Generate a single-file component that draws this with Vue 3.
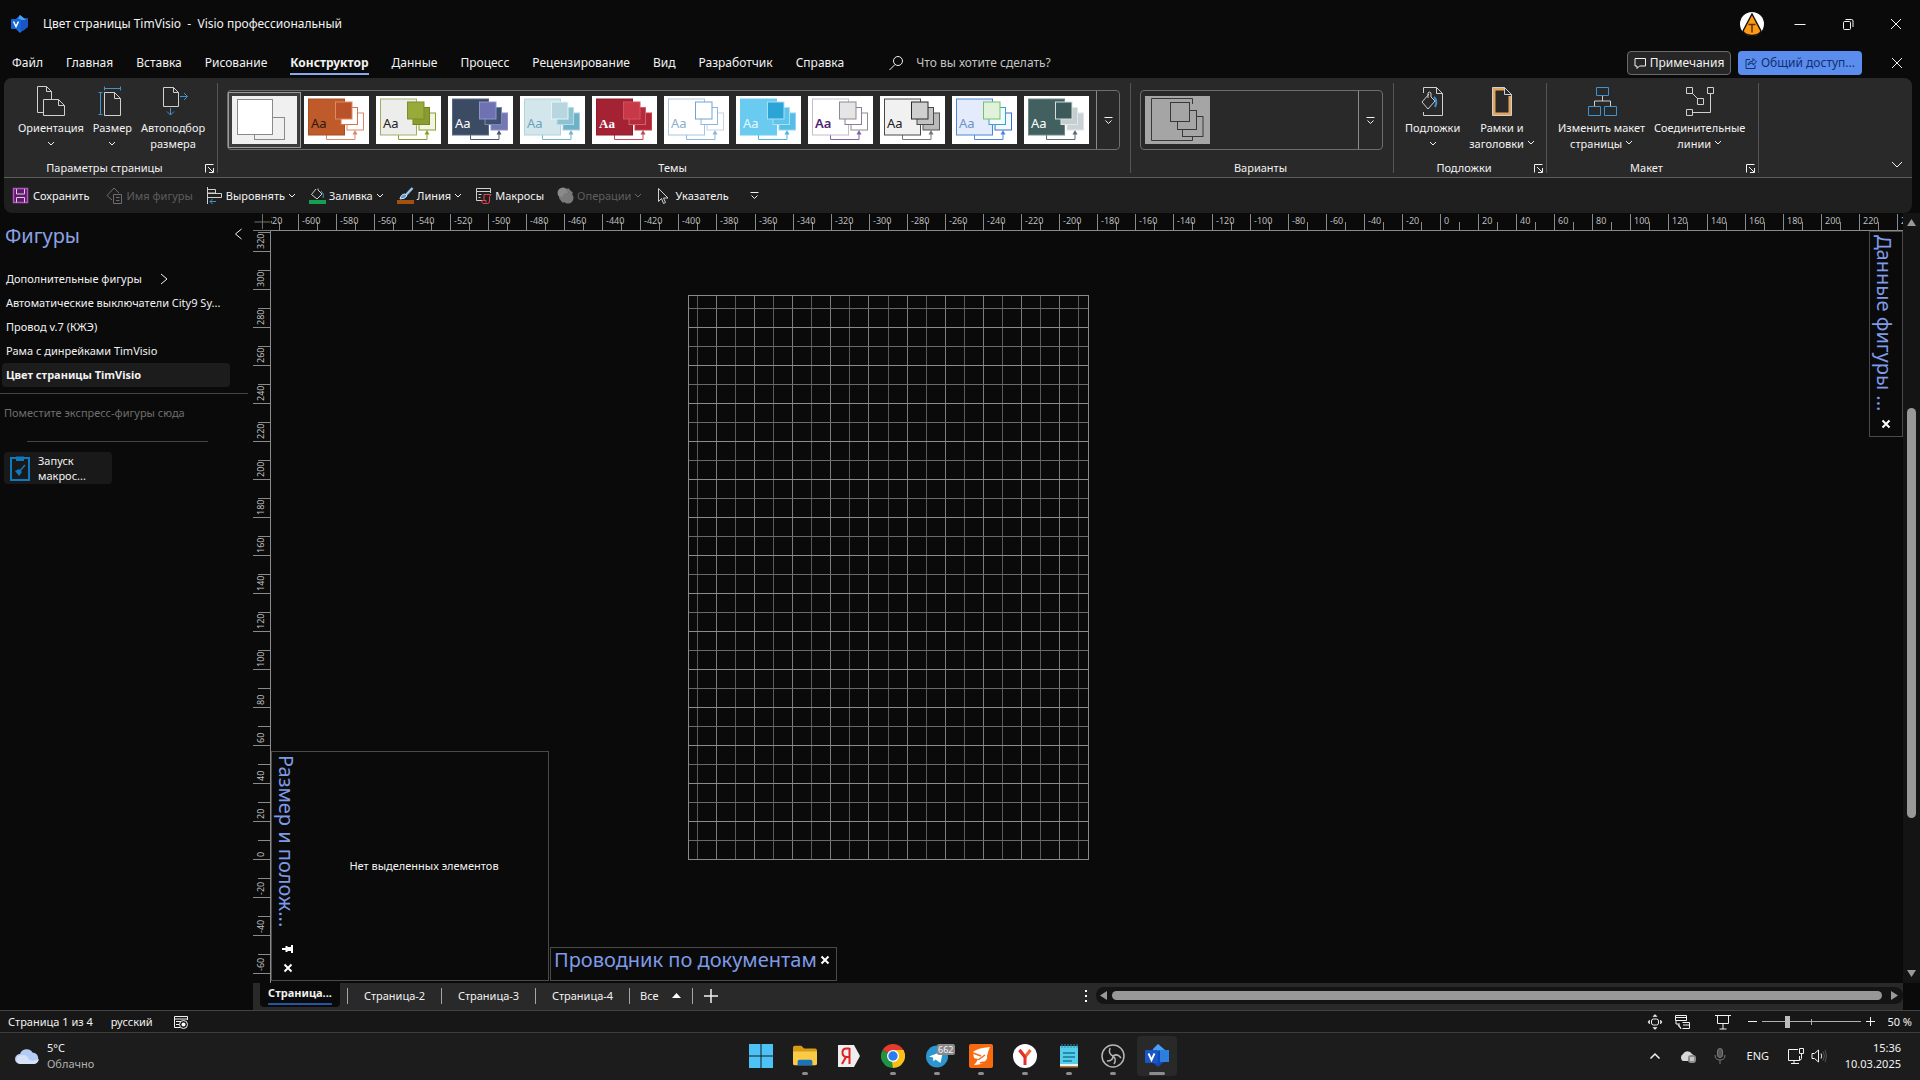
<script setup>
import { ref } from 'vue'

const tabs = ['Файл', 'Главная', 'Вставка', 'Рисование', 'Конструктор', 'Данные', 'Процесс', 'Рецензирование', 'Вид', 'Разработчик', 'Справка']
const activeTab = ref('Конструктор')
const zoom = ref(24)

const themes = [
  { id: 't2', main: '#bf5a2b', edge: '#a94c22', r1: '#b9512a', e1: '#e08a60', r2: '#ffffff', e2: '#d9744a', r3: '#ffffff', e3: '#d9886a', line: '#d9886a', aa: '#2a1a12' },
  { id: 't3', main: '#ededeb', edge: '#a3ad6a', r1: '#98aa3a', e1: '#7d8e28', r2: '#8a9c30', e2: '#75861f', r3: '#f2f4e4', e3: '#8a9c30', line: '#8a9c30', aa: '#222222' },
  { id: 't4', main: '#3b4b63', edge: '#5c6a80', r1: '#6f72b2', e1: '#9395c8', r2: '#3f4f70', e2: '#7f86b0', r3: '#7377b4', e3: '#8b8fc2', line: '#4a5875', aa: '#ffffff' },
  { id: 't5', main: '#d3e6ec', edge: '#b2d2dc', r1: '#b7d6e0', e1: '#e6f3f6', r2: '#8cc3d2', e2: '#b9dbe4', r3: '#6db2c8', e3: '#a6d0dd', line: '#79b3c6', aa: '#6ba3bd' },
  { id: 't6', main: '#a32334', edge: '#8c1c2c', r1: '#c73849', e1: '#d8505f', r2: '#b52b3c', e2: '#d0606c', r3: '#b02636', e3: '#c4404f', line: '#bd4a57', aa: '#ffffff', serif: true },
  { id: 't7', main: '#ffffff', edge: '#a9c5e0', r1: '#ffffff', e1: '#6fa3d4', r2: '#ffffff', e2: '#8db8de', r3: '#ffffff', e3: '#c0d6ea', line: '#8fb6da', aa: '#8caecf' },
  { id: 't8', main: '#68cbef', edge: '#68cbef', r1: '#2ba5d6', e1: '#a7e0f5', r2: '#5fc4ea', e2: '#a7e0f5', r3: '#55bde6', e3: '#8fd6f1', line: '#4fb5dd', aa: '#e9f8fd' },
  { id: 't9', main: '#ffffff', edge: '#c4bccb', r1: '#e5e5e6', e1: '#8b8b90', r2: '#ffffff', e2: '#8d7b9e', r3: '#ffffff', e3: '#8b8b90', line: '#8560a6', aa: '#4d2470', bold: true },
  { id: 't10', main: '#f1f1f1', edge: '#4a4a4a', r1: '#cfcfcf', e1: '#2b2b2b', r2: '#c3c3c3', e2: '#4a4a4a', r3: '#b9b9b9', e3: '#555555', line: '#777777', aa: '#222222' },
  { id: 't11', main: '#e4ebfa', edge: '#4d86d8', r1: '#e0f3da', e1: '#7abf6a', r2: '#f2fdff', e2: '#35a4cf', r3: '#f4f8ff', e3: '#3b6fc4', line: '#4d86d8', aa: '#6c93cc' },
  { id: 't12', main: '#41605f', edge: '#6f8786', r1: '#3c5a5a', e1: '#d5dddd', r2: '#c5cdd1', e2: '#e2e7ea', r3: '#cbd2d7', e3: '#dfe4e8', line: '#5a6b6c', aa: '#ffffff' }
]

const shapes = ['Автоматические выключатели City9 Sy...', 'Провод v.7 (КЖЭ)', 'Рама с динрейками TimVisio', 'Цвет страницы TimVisio']
const activeShape = ref('Цвет страницы TimVisio')

const hTicks = []
for (let v = -620; v <= 240; v += 20) {
  hTicks.push({ v, x: Math.round(1169 + v * 1.904) })
}

/* Vertical ruler: values grow upwards */
const vTicks = []
for (let v = 320; v >= -60; v -= 20) {
  vTicks.push({ v, y: 628 - Math.round(v * 1.9) })
}

/* Drawing page grid, every 10 mm */
const gridX = []
for (let i = 0; i < 21; i++) gridX.push({ p: Math.round(9 + i * 19.05), major: i % 2 === 1 })
const gridY = []
for (let i = 1; i < 30; i++) gridY.push({ p: 564 - i * 19, major: i % 2 === 0 })

const pages = ['Страница-2', 'Страница-3', 'Страница-4']
</script>

<template>
  <div class="app">
    <header class="titlebar">
      <svg class="i18" viewBox="0 0 18 18"><path d="M9 0l5 4v9l-5 5-4-4V4z" fill="#1f6fe0" /><path d="M9 3h8v9l-5 4-5-2z" fill="#1a55c4" /><path d="M9 0l6 5H7z" fill="#4aa3f5" /><rect y="4" width="10" height="10" rx="1" fill="#1565d8" /><path d="M2.500 6.500L5 11.500l2.500-5" fill="none" stroke="#fff" stroke-width="1.500" /></svg>
      <h1 class="doc-title">Цвет страницы TimVisio&nbsp; -&nbsp; Visio профессиональный</h1>
      <div class="win">
        <svg class="avatar" viewBox="0 0 24 24"><circle cx="12" cy="12" r="12" fill="#fff" /><path d="M12 2L3 19q1 4 9 4.500Q20 23 21 19z" fill="#ff9914" stroke="#1a1208" stroke-width="1.500" /><path d="M8.500 12.500h7M12 12.500v8" stroke="#5c3405" stroke-width="1.500" /></svg>
        <button class="ib" aria-label="Свернуть"><svg class="i12" viewBox="0 0 12 12"><path d="M0.500 6.500h11" class="s" /></svg></button>
        <button class="ib" aria-label="Восстановить"><svg class="i12" viewBox="0 0 12 12"><rect x="1.500" y="3.500" width="7" height="8" rx="1" class="s" /><path d="M3.500 1.500h6q1.500 0 1.500 1.500V9" class="s" /></svg></button>
        <button class="ib" aria-label="Закрыть"><svg class="i12" viewBox="0 0 12 12"><path d="M1 1l10 10M11 1L1 11" class="s" /></svg></button>
      </div>
    </header>

    <nav class="tabs">
      <button v-for="t in tabs" :key="t" class="tab" :class="{ on: t === activeTab }" @click="activeTab = t">{{ t }}</button>
      <label class="search">
        <svg class="i16" viewBox="0 0 16 16"><circle cx="10" cy="6" r="4.500" class="s" /><path d="M7 9.500L1.500 15" class="s" /></svg>
        <input type="text" placeholder="Что вы хотите сделать?" aria-label="Что вы хотите сделать?" />
      </label>
      <div class="tab-right">
        <button class="comments"><svg class="i12" viewBox="0 0 12 12"><path d="M1 1.500h10.500V9H5.500L3 11.500V9H1z" class="s" /></svg>Примечания</button>
        <button class="share"><svg class="i12" viewBox="0 0 12 12"><path d="M5 2.500H1v9h9V8M3 8q.5-4 5-4V1.500L11.500 5 8 8V6Q5 6 3 8z" fill="none" stroke="#10306e" /></svg>Общий доступ...</button>
        <button class="ib" aria-label="Закрыть документ"><svg class="i12" viewBox="0 0 12 12"><path d="M1 1l10 10M11 1L1 11" class="s" /></svg></button>
      </div>
    </nav>

    <section class="ribbon">
      <div class="groups">
        <div class="group g-page">
          <div class="body">
            <button class="big">
              <svg class="i32" viewBox="0 0 32 32"><path d="M8 27.500H2.500v-26h9l5 5V14M11.500 1.500v5h5" class="g" /><path d="M8.500 14.500h15l6 6v10h-21zM23.500 14.500v6h6" class="g" /></svg>
              <span>Ориентация</span><svg class="chev" viewBox="0 0 8 6"><path d="M1 1l3 3 3-3" class="s" /></svg>
            </button>
            <button class="big">
              <svg class="i32" viewBox="0 0 32 32"><path d="M8.500 7.500h10l6 6v17h-16zM18.500 7.500v6h6" class="g" /><path d="M4.500 7v23M2.500 7.500h4M2.500 29.500h4M8 3.500h17M8.500 1.500v4M24.500 1.500v4" class="b" /></svg>
              <span>Размер</span><svg class="chev" viewBox="0 0 8 6"><path d="M1 1l3 3 3-3" class="s" /></svg>
            </button>
            <button class="big">
              <svg class="i32" viewBox="0 0 32 32"><path d="M6.500 2.500h10l5 5v14h-15zM16.500 2.500v5h5" class="g" /><path d="M23 11.500h7M27 8l3.500 3.500L27 15M13.500 23v7M10 26.500l3.500 3.500 3.500-3.500" class="b" /></svg>
              <span>Автоподбор</span><span>размера</span>
            </button>
          </div>
          <div class="foot"><span>Параметры страницы</span><button class="launch" aria-label="Параметры страницы"><svg class="i9" viewBox="0 0 9 9"><path d="M.5 8.500V.5h8M3 3l5 5M8.500 4v4.500H4" class="s" /></svg></button></div>
        </div>

        <div class="group g-themes">
          <div class="gallery">
            <button class="thumb sel" aria-label="Без темы">
              <svg viewBox="0 0 65 48"><rect width="65" height="48" fill="#f0f0f0" /><rect x="22.500" y="21.500" width="30" height="22" fill="#f0f0f0" stroke="#8a8a8a" /><rect x="5.500" y="3.500" width="35" height="35" fill="#fff" stroke="#8a8a8a" /></svg>
            </button>
            <button v-for="t in themes" :key="t.id" class="thumb" :aria-label="t.id">
              <svg viewBox="0 0 65 48">
                <rect width="65" height="48" fill="#fff" />
                <path d="M22.500 39v4.500h28.500V36" fill="none" :stroke="t.line" />
                <path d="M51 34l-2.500 4.500h5z" :fill="t.line" />
                <rect x="4.500" y="3" width="36" height="36" :fill="t.main" :stroke="t.edge" />
                <rect x="43" y="17" width="16.500" height="17" :fill="t.r3" :stroke="t.e3" />
                <rect x="37" y="11.500" width="16.500" height="17" :fill="t.r2" :stroke="t.e2" />
                <rect x="31.500" y="6" width="16.500" height="17" :fill="t.r1" :stroke="t.e1" />
                <text x="7" y="32" class="aa" :class="{ serif: t.serif, bold: t.bold }" :fill="t.aa">Aa</text>
              </svg>
            </button>
            <button class="more" aria-label="Ещё темы"><svg class="i9" viewBox="0 0 9 9"><path d="M.5 1.500h8M1.500 4.500l3 3 3-3" class="s" /></svg></button>
          </div>
          <div class="foot"><span>Темы</span></div>
        </div>

        <div class="group g-vars">
          <div class="gallery">
            <button class="thumb" aria-label="Вариант">
              <svg viewBox="0 0 65 48"><rect width="65" height="48" fill="#a5a5a6" /><g fill="#a5a5a6" stroke="#38383a"><path d="M47.500 33v11.500h-41V2.500h41V8" /><rect x="37.500" y="20.500" width="20.500" height="20" /><rect x="32.500" y="14.500" width="19" height="19" /><rect x="25.500" y="6.500" width="19" height="19" /></g></svg>
            </button>
            <button class="more" aria-label="Ещё варианты"><svg class="i9" viewBox="0 0 9 9"><path d="M.5 1.500h8M1.500 4.500l3 3 3-3" class="s" /></svg></button>
          </div>
          <div class="foot"><span>Варианты</span></div>
        </div>

        <div class="group g-back">
          <div class="body">
            <button class="big">
              <svg class="i32" viewBox="0 0 32 32"><path d="M6.500 8V2.500h13l6 6v22h-19V27M19.500 2.500v6h6" class="g" /><path d="M12 9l-7 8 6 7 7-8-4-4V8q-2-2-3 0v5" class="g" /><path d="M17 12q4 4 1 10" class="b" stroke-width="2" /></svg>
              <span>Подложки</span><svg class="chev" viewBox="0 0 8 6"><path d="M1 1l3 3 3-3" class="s" /></svg>
            </button>
            <button class="big">
              <svg class="i32" viewBox="0 0 32 32"><path d="M18 4H8v25h16V11" fill="none" stroke="#e5a55c" stroke-width="3" /><path d="M6.500 30.500v-28h12l7 7v21zM18.500 2.500v7h7" class="g" /></svg>
              <span>Рамки и</span><span>заголовки <svg class="chev" viewBox="0 0 8 6"><path d="M1 1l3 3 3-3" class="s" /></svg></span>
            </button>
          </div>
          <div class="foot"><span>Подложки</span><button class="launch" aria-label="Подложки"><svg class="i9" viewBox="0 0 9 9"><path d="M.5 8.500V.5h8M3 3l5 5M8.500 4v4.500H4" class="s" /></svg></button></div>
        </div>

        <div class="group g-layout">
          <div class="body">
            <button class="big">
              <svg class="i32" viewBox="0 0 32 32"><path d="M16.500 10v6M8.500 21v-5h16v5" class="g" /><path d="M10.500 2.500h12v8h-12zM2.500 21.500h12v9h-12zM18.500 21.500h12v9h-12z" class="b" /></svg>
              <span>Изменить макет</span><span>страницы <svg class="chev" viewBox="0 0 8 6"><path d="M1 1l3 3 3-3" class="s" /></svg></span>
            </button>
            <button class="big">
              <svg class="i32" viewBox="0 0 32 32"><path d="M2.500 2.500h6v6h-6zM23.500 2.500h6v6h-6zM13.500 13.500h6v6h-6zM2.500 24.500h6v6h-6zM8 8l6 6M26.500 8.500v19h-18" class="g" /></svg>
              <span>Соединительные</span><span>линии <svg class="chev" viewBox="0 0 8 6"><path d="M1 1l3 3 3-3" class="s" /></svg></span>
            </button>
          </div>
          <div class="foot"><span>Макет</span><button class="launch" aria-label="Макет"><svg class="i9" viewBox="0 0 9 9"><path d="M.5 8.500V.5h8M3 3l5 5M8.500 4v4.500H4" class="s" /></svg></button></div>
        </div>
        <button class="collapse" aria-label="Свернуть ленту"><svg class="i12" viewBox="0 0 12 12"><path d="M1 4l5 5 5-5" class="s" /></svg></button>
      </div>

      <div class="qat">
        <button class="save"><svg class="i17" viewBox="0 0 17 17"><path d="M1.500 1.500h14v14h-14z" fill="#5b1d66" stroke="#b455c4" stroke-width="1.500" /><path d="M4.500 2v5h8V2M4.500 15.500v-5h8v5" fill="none" stroke="#e6c4ec" /></svg>Сохранить</button>
        <button disabled><svg class="i17" viewBox="0 0 17 17"><path d="M6 13L1 8.500 8 1l5 5" class="d" /><path d="M7.500 7.500h8v9h-8zM10 10.500h3.500M10 13.500h3.500" class="d" /></svg>Имя фигуры</button>
        <button><svg class="i17" viewBox="0 0 17 17"><path d="M1.500 0v17M1.500 2.500h8v3.500h-8M1.500 6.500h14v4h-14" class="g" /><path d="M10 14.500H4M6.500 12L4 14.500 6.500 17" class="b" /></svg>Выровнять<svg class="chev" viewBox="0 0 8 6"><path d="M1 1l3 3 3-3" class="s" /></svg></button>
        <button><svg class="i17" viewBox="0 0 17 17"><path d="M7 2L2.500 7.500 8 12l5-5-4-4V1.500" class="g" /><path d="M12 4q4 3 2 7" class="b" /><rect y="13" width="17" height="4" fill="#12a150" /></svg>Заливка<svg class="chev" viewBox="0 0 8 6"><path d="M1 1l3 3 3-3" class="s" /></svg></button>
        <button><svg class="i17" viewBox="0 0 17 17"><path d="M15.500 1L8 9" stroke="#9cc7ea" stroke-width="2.500" /><path d="M8 7q-4 0-5 5 5 0 7-3z" fill="#5a9bd0" stroke="#d0e4f4" /><rect y="13" width="17" height="4" fill="#a4500f" /></svg>Линия<svg class="chev" viewBox="0 0 8 6"><path d="M1 1l3 3 3-3" class="s" /></svg></button>
        <button><svg class="i17" viewBox="0 0 17 17"><path d="M7 13.500H1.500v-12h14V6M1.500 4.500h14" class="g" /><path d="M3.500 7.500h3M3.500 10.500h2" class="g" /><path d="M9 13V7.500h7l-1.500 2V14q0 2.500-2 2.500H8q-1.500-1-1-3h4v2" fill="none" stroke="#e0484f" /></svg>Макросы</button>
        <button disabled><svg class="i17" viewBox="0 0 17 17"><circle cx="6" cy="6" r="5.500" fill="#8a8a8a" /><circle cx="11" cy="11" r="5.500" fill="#7a7a7a" /><path d="M3 10l4 5M10 2l5 5" stroke="#7a7a7a" stroke-width="3" /></svg>Операции<svg class="chev" viewBox="0 0 8 6"><path d="M1 1l3 3 3-3" class="d" /></svg></button>
        <button><svg class="i17" viewBox="0 0 17 17"><path d="M3.500 1.500v13l3-3 2 5 2-1-2-4.500h4.500z" class="g" /></svg>Указатель</button>
        <button class="qmore" aria-label="Настройка панели"><svg class="i9" viewBox="0 0 9 9"><path d="M.5 1.500h8M1.500 4.500l3 3 3-3" class="s" /></svg></button>
      </div>
    </section>

    <main class="work">
      <aside class="shapes">
        <div class="sh-head"><h2>Фигуры</h2><button class="ib" aria-label="Свернуть панель"><svg class="i12" viewBox="0 0 12 12"><path d="M8.500 1L2.500 6l6 5" class="s" /></svg></button></div>
        <div class="sh-list">
          <button class="sh">Дополнительные фигуры<svg class="i12 arrow" viewBox="0 0 12 12"><path d="M3 1l6 5-6 5" class="s" /></svg></button>
          <button v-for="s in shapes" :key="s" class="sh" :class="{ on: s === activeShape }" @click="activeShape = s">{{ s }}</button>
        </div>
        <p class="hint">Поместите экспресс-фигуры сюда</p>
        <hr />
        <button class="macro">
          <svg viewBox="0 0 20 26"><path d="M1 3h18v22H1z" fill="none" stroke="#0f79bf" stroke-width="2" /><path d="M6 1.500h8V6H6z" fill="#0f79bf" /><path d="M15 10l-6 7" stroke="#0f79bf" stroke-width="1.500" /><path d="M5 16l4-2 3 3-3 4z" fill="#0f79bf" /></svg>
          <span>Запуск<br />макрос...</span>
        </button>
      </aside>

      <div class="editor">
        <div class="view">
          <div class="hrow">
            <svg class="corner" viewBox="0 0 18 18"><path d="M9.500 1v16M1 9.500h17" stroke="#777" /></svg>
            <svg class="hruler">
              <g v-for="t in hTicks" :key="t.v">
                <path :d="`M${t.x}.5 1V18`" stroke="#8a8a8a" />
                <path :d="`M${t.x + 19}.5 9V18`" stroke="#8a8a8a" />
                <text :x="t.x + 4" y="11" class="num">{{ t.v }}</text>
              </g>
            </svg>
          </div>
          <div class="crow">
            <svg class="vruler">
              <g v-for="t in vTicks" :key="t.v">
                <path :d="`M0 ${t.y}.5H17`" stroke="#8a8a8a" />
                <path :d="`M5 ${t.y - 19}.5H17`" stroke="#8a8a8a" />
                <text :transform="`translate(11 ${t.y - 2}) rotate(-90)`" class="num">{{ t.v }}</text>
              </g>
            </svg>
            <div class="canvas">
              <svg class="page" viewBox="0 0 401 565">
                <path v-for="g in gridX" :key="'x' + g.p" :d="`M${g.p}.5 0V565`" :stroke="g.major ? '#7c7c7c' : '#5a5a5a'" />
                <path v-for="g in gridY" :key="'y' + g.p" :d="`M0 ${g.p}.5H401`" :stroke="g.major ? '#8c8c8c' : '#6a6a6a'" />
                <rect x="0.500" y="0.500" width="400" height="564" fill="none" stroke="#8a8a8a" />
              </svg>
              <section class="float size">
                <div class="vtitle"><h2>Размер и полож...</h2>
                  <button class="ib" aria-label="Закрепить"><svg class="i12" viewBox="0 0 12 12"><path d="M0 6h4M4.500 3v6M5 6h4M10 2v8" stroke="#fff" stroke-width="2" fill="none" /><path d="M5 4h5v4H5z" fill="#fff" /></svg></button>
                  <button class="ib" aria-label="Закрыть панель"><svg class="i12" viewBox="0 0 12 12"><path d="M2.500 2.500l7 7M9.500 2.500l-7 7" stroke="#fff" stroke-width="2" /></svg></button>
                </div>
                <p>Нет выделенных элементов</p>
              </section>
              <section class="float docs"><h2>Проводник по документам</h2><button class="ib" aria-label="Закрыть панель"><svg class="i12" viewBox="0 0 12 12"><path d="M2.500 2.500l7 7M9.500 2.500l-7 7" stroke="#fff" stroke-width="2" /></svg></button></section>
              <section class="float data"><div class="vtitle"><h2>Данные фигуры ...</h2><button class="ib" aria-label="Закрыть панель"><svg class="i12" viewBox="0 0 12 12"><path d="M2.500 2.500l7 7M9.500 2.500l-7 7" stroke="#fff" stroke-width="2" /></svg></button></div></section>
            </div>
          </div>
          <div class="pages">
            <button class="pg on"><span>Страница...</span></button>
            <button v-for="p in pages" :key="p" class="pg">{{ p }}</button>
            <button class="pg all">Все<svg class="i9" viewBox="0 0 9 9"><path d="M0 7l4.500-5L9 7z" fill="#fff" /></svg></button>
            <button class="ib add" aria-label="Добавить страницу"><svg class="i14" viewBox="0 0 14 14"><path d="M7 0v14M0 7h14" class="s" stroke-width="1.500" /></svg></button>
            <div class="dots"><i></i><i></i><i></i></div>
            <div class="hscroll">
              <svg class="i9" viewBox="0 0 9 9"><path d="M8 0v9L1 4.500z" fill="#9a9a9a" /></svg><div class="hthumb"></div><svg class="i9" viewBox="0 0 9 9"><path d="M1 0v9l7-4.500z" fill="#9a9a9a" /></svg>
            </div>
          </div>
        </div>
        <div class="vscroll">
          <svg class="i9" viewBox="0 0 9 9"><path d="M0 8h9L4.500 1z" fill="#9a9a9a" /></svg>
          <div class="vtrack"><div class="vthumb"></div></div>
          <svg class="i9" viewBox="0 0 9 9"><path d="M0 1h9L4.500 8z" fill="#9a9a9a" /></svg>
        </div>
      </div>
    </main>

    <footer class="status">
      <span>Страница 1 из 4</span>
      <span class="lang">русский</span>
      <svg class="i16" viewBox="0 0 16 16"><path d="M7 13.500H1.500v-11h13V6M1.500 5h13M3 7.500h5M3 10.500h3" class="s" /><circle cx="10.500" cy="10.500" r="4" class="s" /><circle cx="10.500" cy="10.500" r="2" fill="#fff" /></svg>
      <div class="zoom">
        <button class="ib" aria-label="Вписать"><svg class="i16" viewBox="0 0 16 16"><rect x="4.500" y="5" width="7" height="6" rx="2" class="s" /><path d="M6 2.500L8 .5l2 2zM6 13.500l2 2 2-2zM2.500 6L1 8l1.500 2zM13.500 6L15 8l-1.500 2z" fill="#fff" stroke="#fff" stroke-width=".5" /></svg></button>
        <button class="ib w2" aria-label="Панорама"><svg class="i16" viewBox="0 0 16 16"><path d="M1.500 1.500h11v5h-11zM2 3.500h10M8.500 8.500h7v6h-7M9 11h6M2 7v3h4M4 10q0 3 3 4M5 11l2 4" class="s" /></svg></button>
        <button class="ib w3" aria-label="Режим презентации"><svg class="i16" viewBox="0 0 16 16"><path d="M0 1.500h16M2.500 2v7.500h11V2M8 9.500V15M4.500 15h7" class="s" /></svg></button>
        <button class="ib w4" aria-label="Уменьшить"><svg class="i9" viewBox="0 0 9 9"><path d="M0 4.500h9" class="s" /></svg></button>
        <input v-model="zoom" type="range" min="0" max="100" aria-label="Масштаб" />
        <button class="ib w4" aria-label="Увеличить"><svg class="i9" viewBox="0 0 9 9"><path d="M0 4.500h9M4.500 0v9" class="s" /></svg></button>
        <span class="pct">50 %</span>
      </div>
    </footer>

    <footer class="taskbar">
      <div class="weather">
        <svg viewBox="0 0 24 18"><path d="M5 17a5 5 0 0 1 0-10 7 7 0 0 1 12.500-1.500A5.800 5.800 0 0 1 18.500 17z" fill="#b4cbf3" /><path d="M5 17a4.500 4.500 0 0 1-2-8q8-3 10 2t11 1q-1 5-5.500 5z" fill="#d5e2f9" /></svg>
        <div><span>5°C</span><span class="dim">Облачно</span></div>
      </div>
      <div class="apps">
        <button class="app-btn" aria-label="Пуск"><svg viewBox="0 0 24 24"><path d="M0 0h11.500v11.500H0zM12.500 0H24v11.500H12.500zM0 12.500h11.500V24H0zM12.500 12.500H24V24H12.500z" fill="#4cc2f7" /></svg></button>
        <button class="app-btn run" aria-label="Проводник"><svg viewBox="0 0 26 24"><path d="M0 3q0-2 2-2h7l3 3h12q2 0 2 2v6H0z" fill="#d99a18" /><path d="M0 7h26v13q0 2-2 2H2q-2 0-2-2z" fill="#fbcb45" /><path d="M5 22v-4q0-2 2-2h12q2 0 2 2v4z" fill="#1673c0" /></svg></button>
        <button class="app-btn" aria-label="Яндекс"><svg viewBox="0 0 24 24"><path d="M1 1h16l6 11-6 11H1z" fill="#eeeeee" /><path d="M12.500 4v16M12.500 4.500h-3q-4 0-4 4t4 4.500h3M9 13l-4 7" fill="none" stroke="#e02020" stroke-width="2" /></svg></button>
        <button class="app-btn run" aria-label="Chrome"><svg viewBox="0 0 24 24"><path d="M12 12L1.600 6A12 12 0 0 1 22.400 6z" fill="#e33b2e" /><path d="M12 12L22.400 6A12 12 0 0 1 12 24z" fill="#fbc116" /><path d="M12 12v12A12 12 0 0 1 1.600 6z" fill="#229342" /><path d="M12 6h10.400q2 5-1 9l-4-1zM17 14L12 24l-1-6z" fill="#fbc116" /><circle cx="12" cy="12" r="6" fill="#fff" /><circle cx="12" cy="12" r="4.700" fill="#2a7cf0" /></svg></button>
        <button class="app-btn run" aria-label="Telegram"><svg viewBox="0 0 24 24"><circle cx="12" cy="12.500" r="11" fill="#2b96cf" /><path d="M4 12.500L18 7l-2.500 12-5-3.500-2 2-.5-4z" fill="#fff" /></svg><b class="badge">662</b></button>
        <button class="app-btn run" aria-label="Foxit"><svg viewBox="0 0 24 24"><rect width="24" height="24" rx="2" fill="#f96a10" /><path d="M21 3Q8 4 4 8l1 6 4 1q-1 3-4 6 7 0 10-3 4-3 3-6 1-5 3-9z" fill="#fff" /><path d="M4 9l8 3M9 16l7-5M20 20q-5-3-9-1" fill="none" stroke="#f96a10" stroke-width="1.500" /></svg></button>
        <button class="app-btn run" aria-label="Яндекс Браузер"><svg viewBox="0 0 24 24"><circle cx="12" cy="12" r="12" fill="#fff" /><path d="M6.500 6L12 13l5.500-7" fill="none" stroke="#f2673a" stroke-width="3" /><path d="M6.500 6L12 13v8" fill="none" stroke="#e0312c" stroke-width="3" /></svg></button>
        <button class="app-btn run" aria-label="Блокнот"><svg viewBox="0 0 24 24"><path d="M3 2h18v18H3z" fill="#57cdea" /><path d="M3 20h18v2H3z" fill="#e6f3f6" /><path d="M3 22h18v1.500H3z" fill="#c07b3a" /><path d="M5 0v4M8 0v4M11 0v4M14 0v4M17 0v4M20 0v4" stroke="#2b8fae" /><path d="M6 9h12M6 13h12M6 17h9" stroke="#137a9a" stroke-width="1.500" /></svg></button>
        <button class="app-btn run" aria-label="OBS"><svg viewBox="0 0 24 24"><circle cx="12" cy="12" r="11" fill="#1a1a1a" stroke="#b5b5b5" stroke-width="1.500" /><path d="M9 4q-2 6 3 8 5-3 8 2M12 12q0 5-6 5M12 12q4 3 1 8" fill="none" stroke="#b5b5b5" stroke-width="1.500" /></svg></button>
        <button class="app-btn run cur" aria-label="Visio"><svg viewBox="0 0 24 24"><path d="M13 0l7 6v11l-7 6-6-5V6z" fill="#1746b5" /><path d="M13 0l7 6h-5l-7 3V5z" fill="#4aa0ee" /><path d="M15 6h9v12h-9z" fill="#2b7fe0" /><rect y="6" width="13" height="13" rx="1" fill="#1857c8" /><path d="M3.500 9.500l3 6.500 3-6.500" fill="none" stroke="#fff" stroke-width="1.800" /></svg></button>
      </div>
      <div class="tray">
        <svg class="i12" viewBox="0 0 12 12"><path d="M1.500 8.500L6 4l4.500 4.500" class="s" stroke-width="1.500" /></svg>
        <svg class="i18 t1" viewBox="0 0 18 18"><path d="M4 14a4 4 0 0 1 0-7 5 5 0 0 1 9 0q3 1 2 4H9v3z" fill="#d8d8d8" /><rect x="9" y="8" width="8" height="8" rx="3" fill="#8c8c8c" /><path d="M12 10v4M14 10v4" stroke="#fff" /></svg>
        <svg class="i16 t2" viewBox="0 0 16 16"><rect x="5.500" y="0.500" width="5" height="9" rx="2.500" fill="#555" stroke="#777" /><path d="M3 7q0 5 5 5t5-5M8 12v4" fill="none" stroke="#777" /></svg>
        <span class="eng">ENG</span>
        <svg class="i18 t3" viewBox="0 0 18 18"><path d="M11 2.500H1.500v11h11V9M7 14v2.500M4 16.500h8M12.500 1.500h4v5h-4zM14.500 6.500v5q0 1.500-2 1.500" class="s" /></svg>
        <svg class="i16 t4" viewBox="0 0 16 16"><path d="M1 5.500h2.500L7.500 2v12l-4-3.500H1z" class="s" /><path d="M10 5.500q1.500 2.500 0 5" class="s" /><path d="M12 3.500q3 4.500 0 9M14 2q3 6 0 12" fill="none" stroke="#555" /></svg>
        <div class="clock"><span>15:36</span><span>10.03.2025</span></div>
      </div>
    </footer>
  </div>
</template>

<style>
html, body { background: #0a0a0a; }
body { margin: 0; }
</style>

<style scoped>
.app { display: flex; flex-direction: column; min-height: 100vh; overflow: hidden; background: #0a0a0a; color: #f2f2f2; font-family: "Noto Sans", "Open Sans", sans-serif; font-size: 11px; line-height: 16px; }
.app * { box-sizing: border-box; }
button { background: none; border: 0; padding: 0; margin: 0; color: inherit; font: inherit; white-space: nowrap; }
h1, h2, p { margin: 0; font-weight: 400; }
svg { display: block; flex: none; }
.i9 { width: 9px; height: 9px; } .i12 { width: 12px; height: 12px; } .i14 { width: 14px; height: 14px; } .i16 { width: 16px; height: 16px; }
.i17 { width: 17px; height: 17px; } .i18 { width: 18px; height: 18px; } .i32 { width: 32px; height: 32px; }
.chev { width: 8px; height: 6px; }
.s { fill: none; stroke: #f2f2f2; }
.g { fill: none; stroke: #d0d0d0; }
.b { fill: none; stroke: #3f93cf; }
.d { fill: none; stroke: #6c6c6c; }
.ib { display: flex; align-items: center; justify-content: center; }

.titlebar { display: flex; align-items: center; height: 48px; padding: 0 18px 0 11px; }
.doc-title { margin-left: 14px; font-size: 12px; }
.win { display: flex; align-items: center; margin-left: auto; }
.avatar { width: 24px; height: 24px; margin-right: 24px; }
.win .ib { width: 12px; height: 12px; margin-left: 36px; }
.win .avatar + .ib { margin-left: 6px; }

.tabs { display: flex; align-items: center; height: 30px; padding-left: 12px; font-size: 12px; }
.tab { height: 24px; margin-right: 23px; padding-top: 2px; border-bottom: 2px solid transparent; }
.tab.on { font-weight: 700; border-color: #8aa8ee; }
.search { display: flex; align-items: center; gap: 12px; margin-left: 21px; }
.search input { width: 180px; padding: 0; border: 0; outline: 0; background: none; color: #ccc; font: inherit; }
.search input::placeholder { color: #c4c4c4; opacity: 1; }
.tab-right { display: flex; align-items: center; margin-left: auto; padding-right: 17px; }
.comments, .share { display: flex; align-items: center; justify-content: center; gap: 4px; height: 24px; border-radius: 4px; }
.comments { width: 104px; border: 1px solid #6a6a6a; background: #262626; }
.share { width: 124px; margin: 0 29px 0 7px; background: #5b8def; color: #10306e; }

.ribbon { margin: 0 8px 0 4px; border-radius: 8px; background: #1f1f1f; overflow: hidden; }
.groups { display: flex; height: 100px; background: #292929; border-bottom: 1px solid #5c5c5c; }
.group { display: flex; flex-direction: column; margin: 5px 0 4px; border-right: 1px solid #555; }
.g-page { width: 214px; } .g-themes { width: 913px; } .g-vars { width: 263px; } .g-back { width: 153px; } .g-layout { width: 212px; }
.body { display: flex; gap: 9px; padding: 2px 0 0 14px; }
.g-back .body, .g-layout .body { padding-left: 11px; }
.big { display: flex; flex-direction: column; align-items: center; }
.big .i32 { margin-bottom: 3px; }
.big > .chev { margin-top: 5px; }
.big span .chev { display: inline-block; vertical-align: 2px; }
.foot { display: flex; align-items: center; margin-top: auto; line-height: 10px; height: 10px; padding-right: 3px; }
.foot span { flex: 1; text-align: center; }
.gallery { display: flex; align-items: center; gap: 7px; height: 60px; margin: 7px 10px 0 9px; padding-left: 4px; border: 1px solid #6e6e6e; border-radius: 4px; }
.thumb { width: 65px; height: 48px; flex: none; }
.thumb svg { width: 65px; height: 48px; }
.thumb.sel { box-shadow: 0 0 0 3px #3c3c3c, 0 0 0 4px #9c9c9c; }
.aa { font-size: 13px; } .aa.serif { font-family: "Liberation Serif", serif; font-weight: 700; } .aa.bold { font-weight: 600; }
.more { display: flex; align-items: center; justify-content: center; align-self: stretch; width: 24px; margin-left: auto; border-left: 1px solid #8a8a8a; }
.collapse { align-self: flex-end; margin: 0 9px 7px auto; }
.qat { display: flex; align-items: center; gap: 13px; height: 35px; padding-left: 8px; }
.qat button { display: flex; align-items: center; gap: 3px; }
.qat button:disabled { color: #5e5e5e; }
.qat .save { gap: 4px; margin-right: 4px; }
.qat .qmore { margin-left: 8px; }

.work { display: flex; flex: 1; min-height: 0; }
.shapes { width: 253px; flex: none; }
.sh-head { display: flex; justify-content: space-between; padding: 9px 8px 0 5px; height: 54px; align-items: flex-start; }
.sh-head h2 { font-size: 20px; line-height: 28px; color: #8aa2e4; }
.sh-head .ib { height: 24px; }
.sh-list { padding: 0 0 6px 2px; margin-right: 5px; border-bottom: 1px solid #444; }
.sh { display: flex; align-items: center; width: 228px; height: 24px; padding-left: 4px; border-radius: 4px; }
.sh.on { background: #1c1c1c; font-weight: 700; }
.arrow { margin-left: 16px; }
.hint { padding: 11px 0 0 4px; color: #6e6e6e; }
hr { height: 1px; border: 0; background: #444; margin: 20px 45px 10px 27px; }
.macro { display: flex; align-items: center; gap: 8px; width: 108px; height: 32px; margin-left: 4px; padding-left: 6px; border-radius: 4px; background: #191919; text-align: left; line-height: 15px; }
.macro svg { width: 20px; height: 26px; }

.editor { display: flex; flex: 1; min-width: 0; }
.view { display: flex; flex: 1; min-width: 0; flex-direction: column; }
.hrow { display: flex; height: 18px; }
.corner { width: 18px; height: 18px; border-bottom: 1px solid #777; }
.hruler { flex: 1; min-width: 0; height: 18px; border-bottom: 1px solid #8a8a8a; overflow: hidden; }
.crow { display: flex; flex: 1; }
.vruler { width: 18px; height: auto; align-self: stretch; border-right: 1px solid #8a8a8a; overflow: hidden; }
.num { font-size: 9px; fill: #bdbdbd; }
.canvas { position: relative; flex: 1; overflow: hidden; }
.page { position: absolute; left: 417px; top: 64px; width: 401px; height: 565px; }
.float { position: absolute; display: flex; background: #0a0a0a; border: 1px solid #4a4a4a; }
.float h2 { font-size: 20px; line-height: 24px; color: #7f9be8; white-space: nowrap; }
.vtitle { display: flex; flex-direction: column; align-items: center; width: 32px; padding: 3px 0; }
.vtitle h2 { writing-mode: vertical-rl; align-self: flex-start; margin: 0 0 auto 2px; }
.vtitle .ib { width: 20px; height: 19px; }
.size { left: 0; bottom: 2px; width: 278px; height: 230px; }
.size p { flex: 1; align-self: center; padding-right: 4px; text-align: center; }
.docs { left: 279px; bottom: 2px; width: 287px; height: 34px; padding-left: 3px; }
.docs .ib { width: 16px; height: 24px; }
.data { top: 0; right: 0; width: 34px; height: 206px; }

.pages { display: flex; align-items: center; height: 27px; background: #292929; padding: 0 0 2px 7px; }
.pg { width: 94px; height: 16px; border-right: 1px solid #a5a5a5; }
.pg.on { width: 88px; padding-right: 7px; font-weight: 700; }
.pg.on span { display: block; height: 24px; margin: -5px 0 -3px; padding: 2px 4px 0; background: #0a0a0a; border-radius: 0 0 4px 4px; text-decoration: underline #2456a8 2px; text-underline-offset: 6px; }
.pg.all { display: flex; align-items: center; justify-content: space-between; width: 63px; padding: 0 11px 0 10px; }
.add { margin-left: 11px; }
.dots { display: flex; flex-direction: column; gap: 3px; margin: 0 9px 0 auto; }
.dots i { width: 2px; height: 2px; background: #fff; }
.hscroll { display: flex; align-items: center; gap: 4px; width: calc(49% + 2px); height: 17px; padding: 0 4px 0 3px; border-radius: 8px; background: #141414; }
.hthumb { flex: 1; height: 9px; margin-right: 4px; border-radius: 5px; background: #989898; }
.vscroll { display: flex; flex-direction: column; align-items: center; width: 17px; padding: 5px 0 32px; background: linear-gradient(#141414, #141414) top / 100% calc(100% - 27px) no-repeat; }
.vtrack { flex: 1; width: 9px; padding-top: 181px; }
.vthumb { width: 9px; height: 73%; border-radius: 5px; background: #989898; }

.status { display: flex; align-items: center; height: 22px; padding: 0 8px; background: #171717; border-top: 1px solid #444; }
.lang { margin: 0 20px 0 18px; }
.zoom { display: flex; align-items: center; margin-left: auto; }
.w2 { margin: 0 25px 0 11px; } .w3 { margin-right: 17px; } .w4 { width: 9px; }
.zoom input { appearance: none; width: 99px; height: 14px; margin: 0 5px; background: linear-gradient(#b0b0b0, #b0b0b0) center / 100% 1px no-repeat, linear-gradient(#b0b0b0, #b0b0b0) center / 1px 6px no-repeat; }
.zoom input::-webkit-slider-thumb { appearance: none; width: 5px; height: 12px; background: #bdbdbd; }
.pct { margin-left: 12px; }

.taskbar { display: grid; grid-template-columns: 1fr auto 1fr; align-items: center; height: 48px; padding-bottom: 1px; background: #1c1c1c; border-top: 1px solid #3c3c3c; }
.weather { display: flex; align-items: center; gap: 8px; padding-left: 15px; }
.weather svg { width: 24px; height: 18px; }
.weather span, .clock span { display: block; }
.dim { color: #b0b0b0; }
.apps { display: flex; gap: 4px; margin-left: -3px; }
.app-btn { position: relative; display: flex; align-items: center; justify-content: center; width: 40px; height: 40px; border-radius: 4px; }
.app-btn svg { width: 24px; height: 24px; }
.run::after { content: ""; position: absolute; left: 17px; bottom: 1px; width: 6px; height: 3px; border-radius: 2px; background: #8c8c8c; }
.cur { background: #292929; }
.cur::after { left: 12px; width: 16px; }
.badge { position: absolute; right: 2px; top: 8px; padding: 0 1px; border-radius: 2px; background: #8a8a8a; font-size: 9px; line-height: 11px; font-weight: 400; }
.tray { display: flex; align-items: center; justify-content: flex-end; padding-right: 19px; }
.t1 { margin-left: 18px; } .t2 { margin-left: 15px; } .t3 { margin-left: 18px; } .t4 { margin-left: 6px; }
.eng { margin-left: 19px; }
.clock { width: 74px; text-align: right; }
</style>
